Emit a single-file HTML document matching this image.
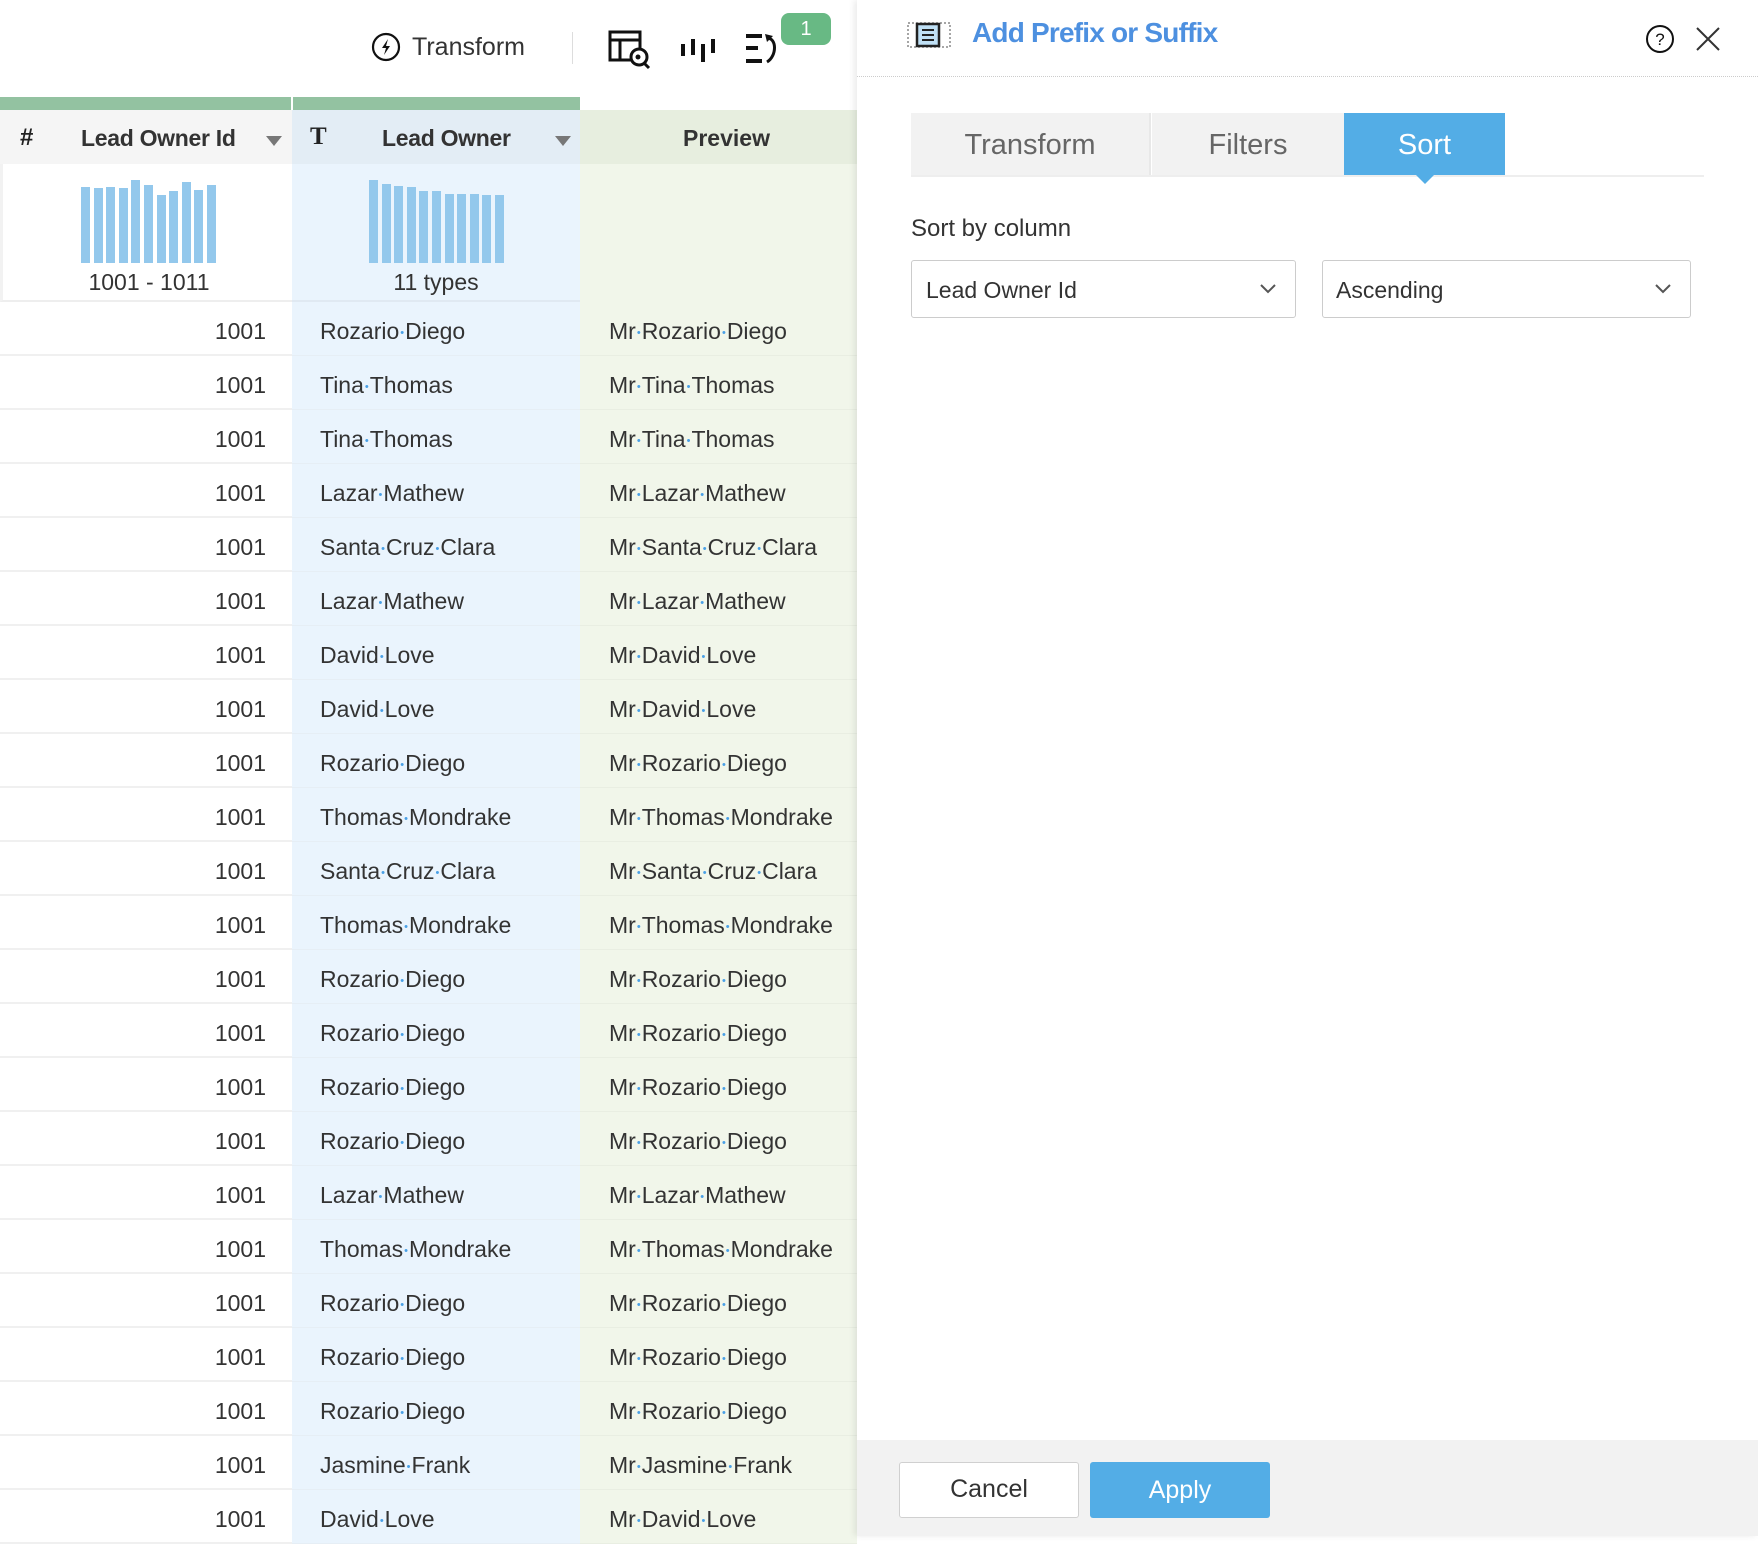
<!DOCTYPE html>
<html><head><meta charset="utf-8"><style>
*{margin:0;padding:0;box-sizing:border-box}
body{width:1758px;height:1536px;position:relative;overflow:hidden;background:#fff;font-family:"Liberation Sans",sans-serif;color:#333}
.a{position:absolute}
.row{position:absolute;left:0;width:857px;height:54px;font-size:23px}
.row .c1{position:absolute;left:0;width:292px;height:54px;border-bottom:2px solid #f0f0f0;text-align:right;padding-right:26px;line-height:58px;background:#fff}
.row .c2{position:absolute;left:292px;width:288px;height:54px;background:#eaf4fd;border-bottom:1px solid #e6eef5;padding-left:28px;line-height:58px}
.row .c3{position:absolute;left:580px;width:277px;height:54px;background:#f1f6ea;border-bottom:1px solid #e9eee2;padding-left:29px;line-height:58px;white-space:nowrap}
.d{color:#4aa0e6;font-size:11px;vertical-align:middle;margin:0 1px}
.bar{position:absolute;bottom:0;width:9px;background:#93c8ec}
</style></head><body>

<!-- toolbar -->
<svg class="a" style="left:370px;top:31px" width="32" height="32" viewBox="0 0 32 32"><circle cx="16" cy="16" r="13" fill="none" stroke="#111" stroke-width="2.2"/><path d="M18 8 L12 17 H16 L14 24 L20 15 H16 Z" fill="#111"/></svg>
<div class="a" style="left:412px;top:33px;font-size:25px;color:#333">Transform</div>
<div class="a" style="left:572px;top:32px;width:1px;height:32px;background:#ddd"></div>
<svg class="a" style="left:608px;top:30px" width="44" height="40" viewBox="0 0 44 40"><rect x="2" y="2" width="30" height="28" fill="none" stroke="#111" stroke-width="3"/><line x1="2" y1="10" x2="32" y2="10" stroke="#111" stroke-width="3"/><line x1="12" y1="10" x2="12" y2="30" stroke="#111" stroke-width="3"/><circle cx="31" cy="27" r="8" fill="#fff" stroke="#111" stroke-width="3"/><circle cx="30" cy="27" r="2.5" fill="#111"/><line x1="36" y1="33" x2="41" y2="38" stroke="#111" stroke-width="3"/></svg>
<svg class="a" style="left:680px;top:38px" width="36" height="24" viewBox="0 0 36 24"><rect x="1" y="6" width="4" height="12" fill="#111"/><rect x="11" y="1" width="4" height="16" fill="#111"/><rect x="21" y="6" width="4" height="18" fill="#111"/><rect x="31" y="1" width="4" height="14" fill="#111"/></svg>
<svg class="a" style="left:745px;top:32px" width="36" height="34" viewBox="0 0 36 34"><rect x="1" y="2" width="16" height="4" fill="#111"/><rect x="1" y="14" width="12" height="4" fill="#111"/><rect x="1" y="27" width="16" height="4" fill="#111"/><path d="M22 6 C32 6 32 24 22 30" fill="none" stroke="#111" stroke-width="3"/><path d="M20 2 L28 4 L22 10 Z" fill="#111"/></svg>
<div class="a" style="left:781px;top:13px;width:50px;height:32px;background:#68b984;border-radius:8px;color:#fff;font-size:20px;text-align:center;line-height:32px">1</div>

<!-- green bar -->
<div class="a" style="left:0;top:97px;width:291px;height:13px;background:#93c2a1"></div>
<div class="a" style="left:293px;top:97px;width:287px;height:13px;background:#93c2a1"></div>
<!-- headers -->
<div class="a" style="left:0;top:110px;width:292px;height:54px;background:#f5f5f5"></div>
<div class="a" style="left:292px;top:110px;width:288px;height:54px;background:#e3edf5"></div>
<div class="a" style="left:580px;top:110px;width:277px;height:54px;background:#e7eedf"></div>
<div class="a" style="left:20px;top:124px;font-size:24px;font-weight:bold;color:#222">#</div>
<div class="a" style="left:81px;top:125px;font-size:23px;font-weight:bold;color:#333;letter-spacing:-0.3px">Lead Owner Id</div>
<div class="a" style="left:266px;top:136px;width:0;height:0;border-left:8px solid transparent;border-right:8px solid transparent;border-top:10px solid #777"></div>
<div class="a" style="left:310px;top:123px;font-size:25px;font-weight:bold;color:#222;font-family:'Liberation Serif',serif">T</div>
<div class="a" style="left:382px;top:125px;font-size:23px;font-weight:bold;color:#333;letter-spacing:-0.3px">Lead Owner</div>
<div class="a" style="left:555px;top:136px;width:0;height:0;border-left:8px solid transparent;border-right:8px solid transparent;border-top:10px solid #777"></div>
<div class="a" style="left:588px;top:125px;width:277px;text-align:center;font-size:23px;font-weight:bold;color:#333">Preview</div>
<!-- histogram area -->
<div class="a" style="left:0;top:164px;width:292px;height:138px;background:#fff;border-left:3px solid #f2f2f2;border-bottom:2px solid #eee"></div>
<div class="a" style="left:292px;top:164px;width:288px;height:138px;background:#eaf4fd;border-bottom:2px solid #e0e9f2"></div>
<div class="a" style="left:580px;top:164px;width:277px;height:138px;background:#f1f6ea"></div>
<div class="a" style="left:81px;top:180px;width:140px;height:83px">
<div class="bar" style="left:0;height:76px"></div><div class="bar" style="left:12.6px;height:75px"></div><div class="bar" style="left:25.2px;height:76px"></div><div class="bar" style="left:37.8px;height:75px"></div><div class="bar" style="left:50.4px;height:83px"></div><div class="bar" style="left:63px;height:78px"></div><div class="bar" style="left:75.6px;height:68px"></div><div class="bar" style="left:88.2px;height:72px"></div><div class="bar" style="left:100.8px;height:81px"></div><div class="bar" style="left:113.4px;height:73px"></div><div class="bar" style="left:126px;height:78px"></div></div>
<div class="a" style="left:369px;top:180px;width:140px;height:83px">
<div class="bar" style="left:0;height:83px"></div><div class="bar" style="left:12.6px;height:79px"></div><div class="bar" style="left:25.2px;height:77px"></div><div class="bar" style="left:37.8px;height:76px"></div><div class="bar" style="left:50.4px;height:72px"></div><div class="bar" style="left:63px;height:72px"></div><div class="bar" style="left:75.6px;height:69px"></div><div class="bar" style="left:88.2px;height:69px"></div><div class="bar" style="left:100.8px;height:69px"></div><div class="bar" style="left:113.4px;height:68px"></div><div class="bar" style="left:126px;height:68px"></div></div>
<div class="a" style="left:0;top:269px;width:298px;text-align:center;font-size:23px">1001 - 1011</div>
<div class="a" style="left:292px;top:269px;width:288px;text-align:center;font-size:23px">11 types</div>

<!-- rows -->
<div class="row" style="top:302px"><div class="c1">1001</div><div class="c2">Rozario<span class="d">•</span>Diego</div><div class="c3">Mr<span class="d">•</span>Rozario<span class="d">•</span>Diego</div></div>
<div class="row" style="top:356px"><div class="c1">1001</div><div class="c2">Tina<span class="d">•</span>Thomas</div><div class="c3">Mr<span class="d">•</span>Tina<span class="d">•</span>Thomas</div></div>
<div class="row" style="top:410px"><div class="c1">1001</div><div class="c2">Tina<span class="d">•</span>Thomas</div><div class="c3">Mr<span class="d">•</span>Tina<span class="d">•</span>Thomas</div></div>
<div class="row" style="top:464px"><div class="c1">1001</div><div class="c2">Lazar<span class="d">•</span>Mathew</div><div class="c3">Mr<span class="d">•</span>Lazar<span class="d">•</span>Mathew</div></div>
<div class="row" style="top:518px"><div class="c1">1001</div><div class="c2">Santa<span class="d">•</span>Cruz<span class="d">•</span>Clara</div><div class="c3">Mr<span class="d">•</span>Santa<span class="d">•</span>Cruz<span class="d">•</span>Clara</div></div>
<div class="row" style="top:572px"><div class="c1">1001</div><div class="c2">Lazar<span class="d">•</span>Mathew</div><div class="c3">Mr<span class="d">•</span>Lazar<span class="d">•</span>Mathew</div></div>
<div class="row" style="top:626px"><div class="c1">1001</div><div class="c2">David<span class="d">•</span>Love</div><div class="c3">Mr<span class="d">•</span>David<span class="d">•</span>Love</div></div>
<div class="row" style="top:680px"><div class="c1">1001</div><div class="c2">David<span class="d">•</span>Love</div><div class="c3">Mr<span class="d">•</span>David<span class="d">•</span>Love</div></div>
<div class="row" style="top:734px"><div class="c1">1001</div><div class="c2">Rozario<span class="d">•</span>Diego</div><div class="c3">Mr<span class="d">•</span>Rozario<span class="d">•</span>Diego</div></div>
<div class="row" style="top:788px"><div class="c1">1001</div><div class="c2">Thomas<span class="d">•</span>Mondrake</div><div class="c3">Mr<span class="d">•</span>Thomas<span class="d">•</span>Mondrake</div></div>
<div class="row" style="top:842px"><div class="c1">1001</div><div class="c2">Santa<span class="d">•</span>Cruz<span class="d">•</span>Clara</div><div class="c3">Mr<span class="d">•</span>Santa<span class="d">•</span>Cruz<span class="d">•</span>Clara</div></div>
<div class="row" style="top:896px"><div class="c1">1001</div><div class="c2">Thomas<span class="d">•</span>Mondrake</div><div class="c3">Mr<span class="d">•</span>Thomas<span class="d">•</span>Mondrake</div></div>
<div class="row" style="top:950px"><div class="c1">1001</div><div class="c2">Rozario<span class="d">•</span>Diego</div><div class="c3">Mr<span class="d">•</span>Rozario<span class="d">•</span>Diego</div></div>
<div class="row" style="top:1004px"><div class="c1">1001</div><div class="c2">Rozario<span class="d">•</span>Diego</div><div class="c3">Mr<span class="d">•</span>Rozario<span class="d">•</span>Diego</div></div>
<div class="row" style="top:1058px"><div class="c1">1001</div><div class="c2">Rozario<span class="d">•</span>Diego</div><div class="c3">Mr<span class="d">•</span>Rozario<span class="d">•</span>Diego</div></div>
<div class="row" style="top:1112px"><div class="c1">1001</div><div class="c2">Rozario<span class="d">•</span>Diego</div><div class="c3">Mr<span class="d">•</span>Rozario<span class="d">•</span>Diego</div></div>
<div class="row" style="top:1166px"><div class="c1">1001</div><div class="c2">Lazar<span class="d">•</span>Mathew</div><div class="c3">Mr<span class="d">•</span>Lazar<span class="d">•</span>Mathew</div></div>
<div class="row" style="top:1220px"><div class="c1">1001</div><div class="c2">Thomas<span class="d">•</span>Mondrake</div><div class="c3">Mr<span class="d">•</span>Thomas<span class="d">•</span>Mondrake</div></div>
<div class="row" style="top:1274px"><div class="c1">1001</div><div class="c2">Rozario<span class="d">•</span>Diego</div><div class="c3">Mr<span class="d">•</span>Rozario<span class="d">•</span>Diego</div></div>
<div class="row" style="top:1328px"><div class="c1">1001</div><div class="c2">Rozario<span class="d">•</span>Diego</div><div class="c3">Mr<span class="d">•</span>Rozario<span class="d">•</span>Diego</div></div>
<div class="row" style="top:1382px"><div class="c1">1001</div><div class="c2">Rozario<span class="d">•</span>Diego</div><div class="c3">Mr<span class="d">•</span>Rozario<span class="d">•</span>Diego</div></div>
<div class="row" style="top:1436px"><div class="c1">1001</div><div class="c2">Jasmine<span class="d">•</span>Frank</div><div class="c3">Mr<span class="d">•</span>Jasmine<span class="d">•</span>Frank</div></div>
<div class="row" style="top:1490px"><div class="c1">1001</div><div class="c2">David<span class="d">•</span>Love</div><div class="c3">Mr<span class="d">•</span>David<span class="d">•</span>Love</div></div>

<!-- right panel -->
<div class="a" style="left:857px;top:0;width:901px;height:1536px;background:#fff;box-shadow:-3px 0 6px rgba(0,0,0,0.08)"></div>
<svg class="a" style="left:907px;top:22px" width="44" height="26" viewBox="0 0 44 26"><rect x="1" y="1" width="42" height="24" fill="none" stroke="#888" stroke-width="1.5" stroke-dasharray="2 2"/><rect x="10" y="2" width="22" height="22" fill="#bfe0f5" stroke="#222" stroke-width="2.5"/><line x1="15" y1="8" x2="27" y2="8" stroke="#222" stroke-width="2"/><line x1="15" y1="13" x2="27" y2="13" stroke="#222" stroke-width="2"/><line x1="15" y1="18" x2="27" y2="18" stroke="#222" stroke-width="2"/></svg>
<div class="a" style="left:972px;top:17px;font-size:28px;font-weight:bold;color:#4d90e0;letter-spacing:-0.8px">Add Prefix or Suffix</div>
<svg class="a" style="left:1645px;top:24px" width="30" height="30" viewBox="0 0 30 30"><circle cx="15" cy="15" r="13" fill="none" stroke="#111" stroke-width="2"/><text x="15" y="21" text-anchor="middle" font-size="17" font-family="Liberation Sans" fill="#111">?</text></svg>
<svg class="a" style="left:1695px;top:26px" width="26" height="26" viewBox="0 0 26 26"><path d="M2 2 L24 24 M24 2 L2 24" stroke="#333" stroke-width="2"/></svg>
<div class="a" style="left:857px;top:76px;width:901px;border-top:1px dotted #ccc"></div>

<div class="a" style="left:911px;top:113px;width:240px;height:62px;background:#f2f2f2;border-right:2px solid #e8e8e8;text-align:center;line-height:64px;font-size:29px;color:#666">Transform</div>
<div class="a" style="left:1152px;top:113px;width:192px;height:62px;background:#f2f2f2;text-align:center;line-height:64px;font-size:29px;color:#666">Filters</div>
<div class="a" style="left:1344px;top:113px;width:161px;height:62px;background:#53ade6;text-align:center;line-height:64px;font-size:29px;color:#fff">Sort</div>
<div class="a" style="left:911px;top:175px;width:793px;height:2px;background:#eee"></div>
<div class="a" style="left:1416px;top:175px;width:0;height:0;border-left:9px solid transparent;border-right:9px solid transparent;border-top:9px solid #53ade6"></div>

<div class="a" style="left:911px;top:215px;font-size:24px;color:#333">Sort by column</div>
<div class="a" style="left:911px;top:260px;width:385px;height:58px;border:1.5px solid #ccc;border-radius:3px;font-size:23px;line-height:58px;padding-left:14px">Lead Owner Id</div>
<svg class="a" style="left:1260px;top:283px" width="16" height="12" viewBox="0 0 16 12"><path d="M1 2 L8 9 L15 2" fill="none" stroke="#555" stroke-width="2"/></svg>
<div class="a" style="left:1322px;top:260px;width:369px;height:58px;border:1.5px solid #ccc;border-radius:3px;font-size:23px;line-height:58px;padding-left:13px">Ascending</div>
<svg class="a" style="left:1655px;top:283px" width="16" height="12" viewBox="0 0 16 12"><path d="M1 2 L8 9 L15 2" fill="none" stroke="#555" stroke-width="2"/></svg>

<div class="a" style="left:857px;top:1440px;width:901px;height:96px;background:#f2f2f2"></div>
<div class="a" style="left:899px;top:1462px;width:180px;height:56px;background:#fff;border:1.5px solid #d0d0d0;border-radius:3px;text-align:center;line-height:53px;font-size:25px;color:#333">Cancel</div>
<div class="a" style="left:1090px;top:1462px;width:180px;height:56px;background:#53ade6;border-radius:3px;text-align:center;line-height:56px;font-size:25px;color:#fff">Apply</div>
</body></html>
